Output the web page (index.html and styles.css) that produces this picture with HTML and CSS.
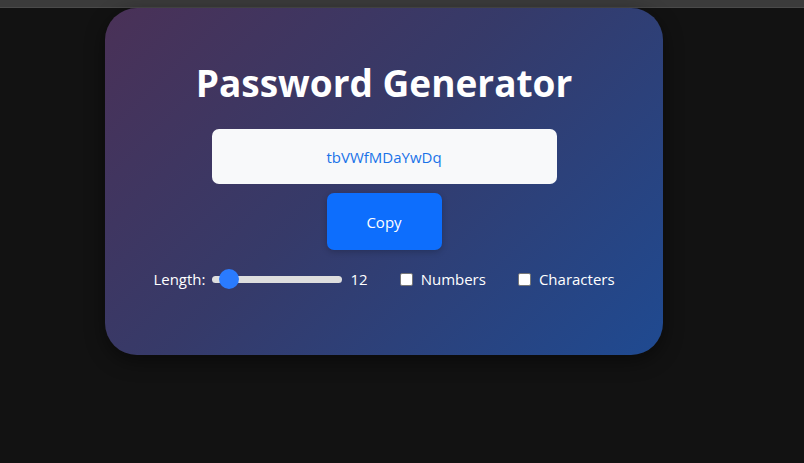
FILE: index.html
```html
<!DOCTYPE html>
<html>
<head>
<meta charset="utf-8">
<link rel="stylesheet" href="styles.css">
</head>
<body>
<div class="topbar"></div>
<main class="stage">
  <section class="card">
    <h1 class="title">Password Generator</h1>
    <div class="output">tbVWfMDaYwDq</div>
    <button class="copy">Copy</button>
    <div class="controls">
      <label class="ctl">Length:
        <span class="slider"><span class="track"></span><span class="thumb"></span></span>
        <span class="val">12</span>
      </label>
      <label class="ctl"><span class="box"></span>Numbers</label>
      <label class="ctl"><span class="box"></span>Characters</label>
    </div>
  </section>
</main>
</body>
</html>
```
FILE: styles.css
```css
html, body { margin: 0; padding: 0; }
body {
  background: #121212;
  width: 804px;
  height: 463px;
  overflow: hidden;
  font-family: "Open Sans", "Noto Sans", sans-serif;
}
.topbar {
  height: 7px;
  background: #3b3b3b;
  border-bottom: 1px solid #4a4a4a;
}
.stage {
  display: flex;
  justify-content: flex-start;
  padding-left: 105px;
}
.card {
  width: 558px;
  height: 347px;
  box-sizing: border-box;
  border-radius: 32px;
  background: linear-gradient(135deg, #4a3157 0%, #363a69 45%, #1f4a91 100%);
  box-shadow: 0 6px 20px rgba(0,0,0,0.45);
  display: flex;
  flex-direction: column;
  align-items: center;
  padding-top: 52px;
}
.title {
  margin: 0;
  color: #fff;
  font-size: 37px;
  font-weight: 700;
  line-height: 46px;
}
.output {
  margin-top: 23px;
  width: 345px;
  height: 55px;
  border-radius: 7px;
  background: #f8f9fa;
  color: #1a73e8;
  font-size: 15px;
  display: flex;
  align-items: center;
  justify-content: center;
}
.copy {
  margin-top: 9px;
  width: 115px;
  height: 57px;
  border: 0;
  border-radius: 7px;
  background: #0d6efd;
  color: #fff;
  font-family: inherit;
  font-size: 15px;
  box-shadow: 0 2px 6px rgba(0,0,0,0.2);
}
.controls {
  margin-top: 19px;
  display: flex;
  align-items: center;
  gap: 32px;
  color: #fff;
  font-size: 15px;
}
.ctl {
  display: flex;
  align-items: center;
}
.slider {
  position: relative;
  width: 130px;
  height: 20px;
  margin-left: 7px;
  margin-right: 8px;
  display: flex;
  align-items: center;
}
.track {
  width: 100%;
  height: 7px;
  border-radius: 4px;
  background: #dedede;
}
.thumb {
  position: absolute;
  left: 7px;
  top: 0;
  width: 20px;
  height: 20px;
  border-radius: 50%;
  background: #2a7bff;
}
.box {
  width: 11px;
  height: 11px;
  border: 1px solid #767676;
  border-radius: 2px;
  background: #fff;
  margin-right: 8px;
}
```
